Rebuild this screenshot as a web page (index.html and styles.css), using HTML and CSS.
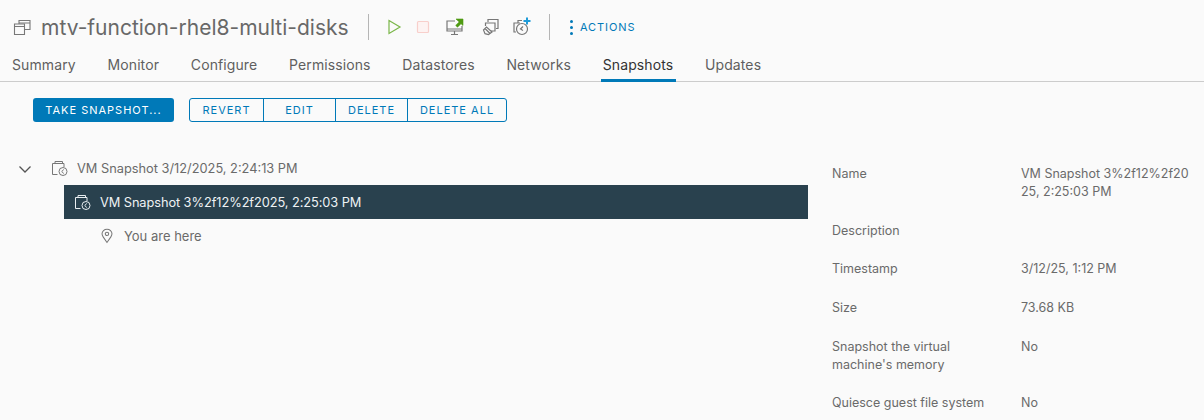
FILE: index.html
```html
<!DOCTYPE html>
<html lang="en">
<head>
    <meta charset="UTF-8">
    <title>mtv-function-rhel8-multi-disks - Snapshots</title>
    <link rel="stylesheet" href="styles.css">
</head>
<body>

    <div class="title-bar">
        <svg class="vm-icon" width="18" height="18" viewBox="0 0 18 18" fill="none" stroke="#777" stroke-width="1.1">
            <path d="M6 6V2.500h11v9h-5"/>
            <path d="M1.500 8V6h10v10.500h-10z"/>
            <path d="M1.500 8.500h10M6 5h11"/>
        </svg>
        <h1>mtv-function-rhel8-multi-disks</h1>
        <span class="divider"></span>
        <div class="tools">
            <svg width="18" height="18" viewBox="0 0 18 18" fill="none" stroke="#7ab648" stroke-width="1.2">
                <path d="M4 2.500 15 9 4 15.500z"/>
            </svg>
            <svg width="18" height="18" viewBox="0 0 18 18" fill="#fdf3f2" stroke="#f8cfcb" stroke-width="1.2">
                <rect x="3.500" y="3.500" width="11" height="11" rx="1"/>
            </svg>
            <svg class="tool-console" width="20" height="20" viewBox="0 0 20 20" fill="none" stroke="#777" stroke-width="1.2">
                <path d="M10 4H2v10h15V9"/>
                <path d="M2 12h15M9.500 14v3M6 17.500h7"/>
                <path d="M11 2h7v6.500l-2-1.800-3.500 3.500-1.800-1.800 3.500-3.500z" fill="#4f9a12" stroke="#4f9a12" stroke-width=".6"/>
            </svg>
            <svg class="tool-migrate" width="18" height="20" viewBox="0 0 18 20" fill="none" stroke="#777" stroke-width="1.2">
                <path d="M6 5V2.500h10v9h-2"/>
                <path d="M3.500 9V6h9.500v8H9"/>
                <path d="M1.500 13l3-3 5.500 5-2 1.500-1.500 1-3.500-.8zM3 11.500l5 5"/>
            </svg>
            <svg width="20" height="20" viewBox="0 0 20 20" fill="none" stroke="#777" stroke-width="1.2">
                <path d="M7 6V3.500h4M3 8.500V6h6M3 8.500V15h2"/>
                <circle cx="11" cy="12" r="5.500"/>
                <path d="M12 9.500 9.500 12l2.500 1.500"/>
                <path d="M16 .5v7M12.500 4h7" stroke="#1f9bd8" stroke-width="2"/>
            </svg>
        </div>
        <span class="divider"></span>
        <a class="actions"><span class="dots"><i></i><i></i><i></i></span>ACTIONS</a>
    </div>

    <div class="tabs">
        <a>Summary</a>
        <a>Monitor</a>
        <a>Configure</a>
        <a>Permissions</a>
        <a>Datastores</a>
        <a>Networks</a>
        <a class="active">Snapshots</a>
        <a>Updates</a>
    </div>

    <div class="toolbar">
        <button class="btn-primary">TAKE SNAPSHOT...</button>
        <div class="btn-group">
            <button class="revert">REVERT</button>
            <button class="edit">EDIT</button>
            <button class="delete">DELETE</button>
            <button class="delete-all">DELETE ALL</button>
        </div>
    </div>

    <div class="content">
        <div class="tree">
            <div class="tree-row root">
                <svg class="caret" width="14" height="14" viewBox="0 0 14 14" fill="none" stroke="#555" stroke-width="1.3">
                    <path d="M1.500 4.500 7 10l5.500-5.500"/>
                </svg>
                <svg class="snap-icon" width="17" height="17" viewBox="0 0 17 17" fill="none" stroke="#777" stroke-width="1">
                    <path d="M4 3.500V1.500h7.500v2"/>
                    <path d="M1.500 6.500v-3H13v3.500M1.500 6v8.500h5"/>
                    <circle cx="12" cy="11.500" r="4"/>
                    <path d="M12.800 9.500 10.700 11.500l2.100 2"/>
                </svg>
                <span>VM Snapshot 3/12/2025, 2:24:13 PM</span>
            </div>
            <div class="tree-row selected">
                <svg class="snap-icon" width="17" height="17" viewBox="0 0 17 17" fill="none" stroke="#e8edf0" stroke-width="1">
                    <path d="M4 3.500V1.500h7.500v2"/>
                    <path d="M1.500 6.500v-3H13v3.500M1.500 6v8.500h5"/>
                    <circle cx="12" cy="11.500" r="4"/>
                    <path d="M12.800 9.500 10.700 11.500l2.100 2"/>
                </svg>
                <span>VM Snapshot 3%2f12%2f2025, 2:25:03 PM</span>
            </div>
            <div class="tree-row here">
                <svg width="12" height="16" viewBox="0 0 14 17" fill="none" stroke="#777" stroke-width="1.2">
                    <path d="M7 16 2.500 9.500C1.500 8 1.200 7 1.200 6a5.800 5.300 0 0 1 11.600 0c0 1-.3 2-1.300 3.500z"/>
                    <circle cx="7" cy="6" r="2"/>
                </svg>
                <span>You are here</span>
            </div>
        </div>

        <div class="details">
            <div class="label">Name</div>
            <div class="value">VM Snapshot 3%2f12%2f20<br>25, 2:25:03 PM</div>
            <div class="label">Description</div>
            <div class="value"></div>
            <div class="label">Timestamp</div>
            <div class="value">3/12/25, 1:12 PM</div>
            <div class="label">Size</div>
            <div class="value">73.68 KB</div>
            <div class="label">Snapshot the virtual<br>machine's memory</div>
            <div class="value">No</div>
            <div class="label">Quiesce guest file system</div>
            <div class="value">No</div>
        </div>
    </div>

</body>
</html>
```

FILE: styles.css
```css
body {
    margin: 0;
    background: #fafafa;
    color: #6a6a6a;
    font-family: 'Inter', 'Open Sans', sans-serif;
    font-size: 12.800px;
    height: 420px;
    overflow: hidden;
}

.title-bar {
    display: flex;
    align-items: center;
    height: 54px;
    padding-left: 13px;
}

.vm-icon {
    margin-right: 10px;
}

h1 {
    margin: 0;
    font-size: 21px;
    font-weight: 400;
    color: #686868;
    white-space: nowrap;
    width: 327px;
}

.divider {
    width: 1px;
    height: 26px;
    background: #b5b5b5;
}

.tools {
    display: flex;
    align-items: center;
    gap: 11px;
    width: 180px;
    padding-left: 16px;
    box-sizing: border-box;
}

.tool-console {
    margin-left: 2px;
}

.tool-migrate {
    margin-left: 6px;
}

.actions {
    display: flex;
    align-items: center;
    margin-left: 20px;
    color: #0079b8;
    font-size: 11px;
    letter-spacing: .9px;
}

.dots {
    display: flex;
    flex-direction: column;
    gap: 3px;
    margin-right: 7px;
}

.dots i {
    display: block;
    width: 3px;
    height: 3px;
    border-radius: 50%;
    background: #0079b8;
}

.tabs {
    display: flex;
    height: 27px;
    border-bottom: 1px solid #ccc;
    padding-left: 12px;
}

.tabs a {
    display: block;
    margin-right: 31.800px;
    color: #5f5f5f;
    font-size: 14px;
    letter-spacing: .1px;
    line-height: 22px;
}

.tabs a.active {
    color: #333;
    height: 25px;
    padding: 0 3px 0 2px;
    margin: 0 28.800px 0 -2px;
    border-bottom: 3px solid #0079b8;
}

.toolbar {
    display: flex;
    gap: 15px;
    padding: 16px 0 0 33px;
}

button {
    font-family: inherit;
    font-size: 11px;
    letter-spacing: 1px;
    height: 24px;
    padding: 0;
    white-space: nowrap;
}

.btn-primary {
    width: 141px;
    background: #0079b8;
    color: #fff;
    border: none;
    border-radius: 3px;
}

.btn-group {
    display: flex;
    border: 1px solid #0079b8;
    border-radius: 3px;
    height: 22px;
}

.btn-group button {
    height: 22px;
    background: none;
    border: none;
    border-right: 1px solid #0079b8;
    color: #0079b8;
}

.btn-group button:last-child {
    border-right: none;
}

.revert { width: 74px; }
.edit { width: 72px; }
.delete { width: 72px; }
.delete-all { width: 98px; }

.content {
    display: flex;
    padding-top: 30px;
}

.tree {
    width: 808px;
    flex: none;
}

.tree-row {
    display: flex;
    align-items: center;
}

.root {
    height: 33px;
    padding-left: 18px;
}

.caret {
    margin-right: 19px;
}

.snap-icon {
    margin-right: 9px;
}

.selected {
    height: 34px;
    margin-left: 64px;
    padding-left: 10px;
    background: #29414e;
    color: #eef2f4;
    letter-spacing: -.08px;
}

.here {
    height: 33px;
    padding-left: 101px;
    font-size: 13px;
}

.here svg {
    margin-right: 11px;
}

.details {
    display: grid;
    grid-template-columns: 189px 175px;
    row-gap: 20.700px;
    margin-left: 24px;
    padding-top: 13px;
    line-height: 18px;
    font-size: 12.500px;
}
```
